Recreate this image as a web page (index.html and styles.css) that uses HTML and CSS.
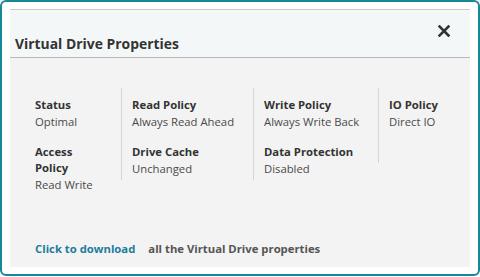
FILE: index.html
```html
<!DOCTYPE html>
<html lang="en">
<head>
  <meta charset="UTF-8" />
  <title>Virtual Drive Properties</title>
  <link rel="stylesheet" href="styles.css">
</head>
<body>
  <div class="modal">
    <div class="panel">
      <!-- header -->
      <div class="panel-head">
        <h2 class="title">Virtual Drive Properties</h2>
        <button class="close" aria-label="Close">
          <svg width="12" height="12" viewBox="0 0 12 12"><path d="M1.5 1.5L10.5 10.5M10.5 1.5L1.5 10.5" stroke="#333" stroke-width="2.6" stroke-linecap="square"/></svg>
        </button>
      </div>
      <!-- properties -->
      <div class="panel-body">
        <div class="props">
          <div class="col col-1">
            <div class="prop"><div class="label">Status</div><div class="value">Optimal</div></div>
            <div class="prop"><div class="label">Access Policy</div><div class="value">Read Write</div></div>
          </div>
          <div class="col col-2 divided">
            <div class="prop"><div class="label">Read Policy</div><div class="value">Always Read Ahead</div></div>
            <div class="prop"><div class="label">Drive Cache</div><div class="value">Unchanged</div></div>
          </div>
          <div class="col col-3 divided">
            <div class="prop"><div class="label">Write Policy</div><div class="value">Always Write Back</div></div>
            <div class="prop"><div class="label">Data Protection</div><div class="value">Disabled</div></div>
          </div>
          <div class="col col-4 divided short">
            <div class="prop"><div class="label">IO Policy</div><div class="value">Direct IO</div></div>
          </div>
        </div>
        <div class="download"><a href="#">Click to download</a><span>all the Virtual Drive properties</span></div>
      </div>
    </div>
  </div>
</body>
</html>
```

FILE: styles.css
```css
:root{--teal:#17879a;--text:#333;--muted:#4a4a4a;--link:#1f7c9c}
*{box-sizing:border-box;margin:0;padding:0}
body{font-family:'Open Sans',sans-serif;background:#fff;color:var(--text);width:480px;height:277px}
.modal{width:480px;height:276px;border:2px solid var(--teal);border-radius:6px;padding:7px 7px 7px 8px;background:#fff}
/* panel */
.panel{width:460px;height:258px;display:flex;flex-direction:column}
.panel-head{height:49px;background:#f4f7f8;border-top:1px solid #cbcbcb;border-bottom:1px solid #b8b8b8;display:flex;justify-content:space-between;padding:0 20px 0 5px}
.title{align-self:flex-end;font-size:13.9px;font-weight:700;line-height:18px;margin-bottom:4px;color:#333}
.close{align-self:flex-start;margin-top:15px;border:none;background:none;width:12px;height:12px;display:flex;cursor:pointer}
.panel-body{flex:1;background:#f3f3f3;padding:30px 15px 10px;display:flex;flex-direction:column}
/* property columns */
.props{display:flex;align-items:flex-start}
.col{padding:9px 10px 0;flex-shrink:0}
.col-1{width:96px;padding-right:22px}
.col-2{width:132px}
.col-3{width:125px}
.col-4{width:76px}
.divided{border-left:1px solid #d6d6d6;height:92px}
.divided.short{height:75px}
.prop+.prop{margin-top:14px}
.label{font-size:11.3px;font-weight:700;line-height:16px;color:#333}
.value{font-size:11.3px;line-height:16px;margin-top:1px;color:var(--muted)}
/* footer */
.download{margin-top:auto;font-size:11.3px;font-weight:700;line-height:16px;padding-left:10px;display:flex;gap:13px}
.download a{color:var(--link);text-decoration:none}
.download span{color:#555}
```
